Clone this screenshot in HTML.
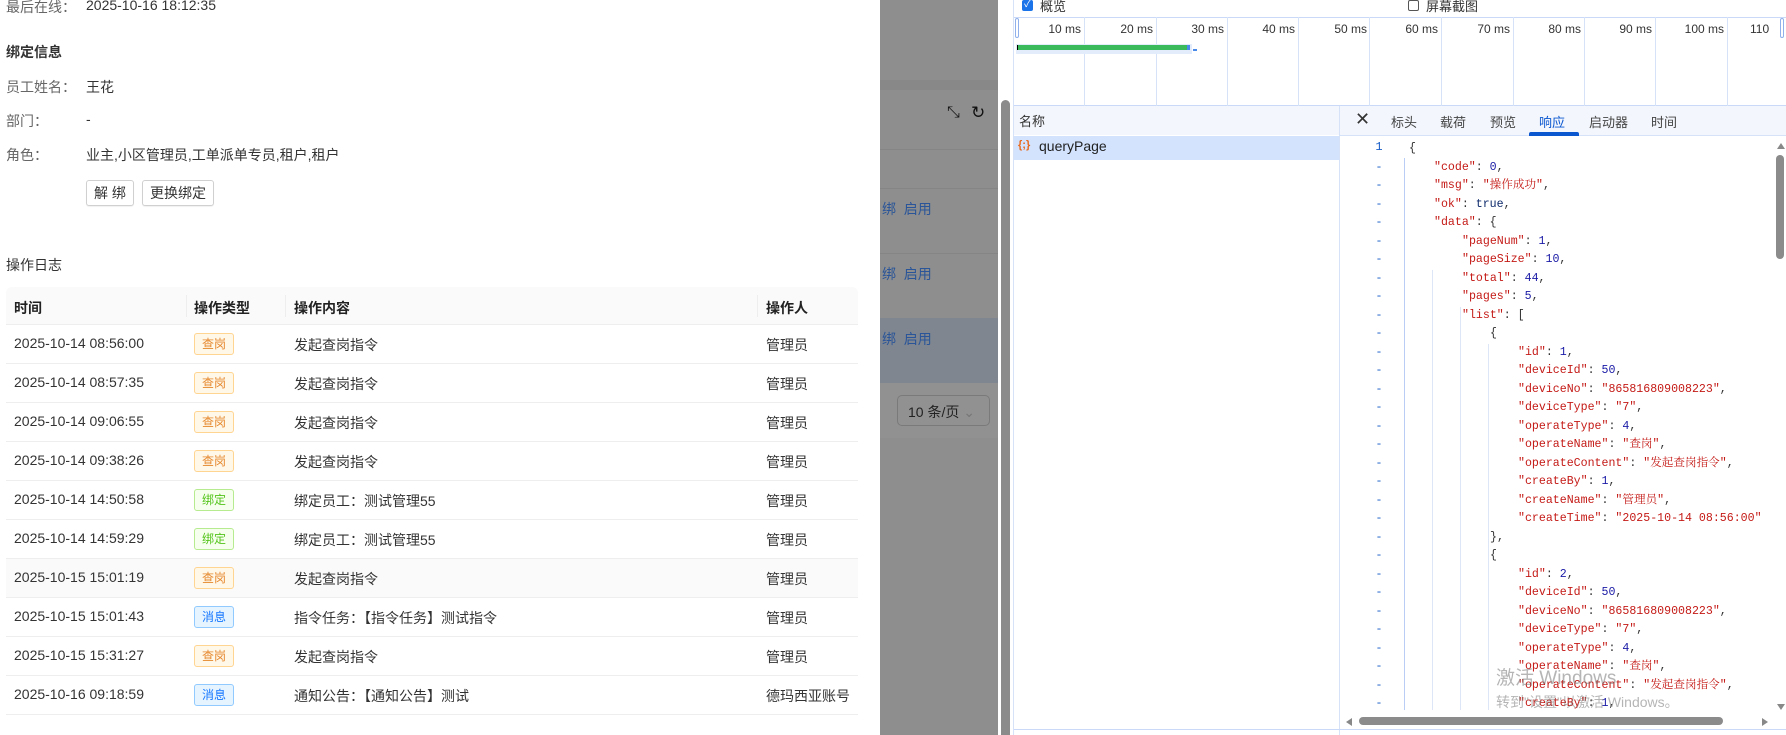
<!DOCTYPE html>
<html><head><meta charset="utf-8"><style>
*{margin:0;padding:0;box-sizing:border-box}
body{width:1786px;height:735px;overflow:hidden;background:#fff;font-family:"Liberation Sans","Noto Sans CJK SC",sans-serif;font-size:14px;color:#333;position:relative}
.a{position:absolute;white-space:nowrap}
.lbl{color:#666}
.btn{position:absolute;border:1px solid #d0d0d0;border-radius:3px;background:#fff;font-size:14px;line-height:24px;text-align:center;box-shadow:0 1px 1px rgba(0,0,0,.06)}
.row{position:absolute;left:10px;width:852px;height:39px;border-bottom:1px solid #eee;font-size:14px;color:#333}
.row span{position:absolute;top:10px}
.tag{position:absolute;left:188px;top:8px;width:40px;height:22px;border-radius:3px;font-size:12px;line-height:20px;text-align:center;border:1px solid}
.cha{color:#e6892e;background:#fff7e8;border-color:#ffd591}
.bd{color:#52c41a;background:#f6ffed;border-color:#b7eb8f}
.xx{color:#1677ff;background:#e6f4ff;border-color:#91caff}
.code{position:absolute;font-family:"Liberation Mono","Noto Serif CJK SC",monospace;font-size:11.6px;white-space:pre;line-height:18.5px}
.k{color:#c41a16}.n{color:#1a1aa6}.t{color:#333}
.ln{position:absolute;left:1374px;width:10px;color:#1a5fc8;font-family:"Liberation Mono",monospace;font-size:12px;text-align:center}
.g{position:absolute;width:1px;background:#b9cdf5}
.tk{position:absolute;top:17px;width:1px;height:89px;background:#d6e2f8}
.tl{position:absolute;top:22px;font-size:12px;color:#333;text-align:right;width:60px}
</style></head><body>
<!-- left panel -->
<div class="a lbl" style="left:6px;top:-3px">最后在线：</div>
<div class="a" style="left:86px;top:-3px">2025-10-16 18:12:35</div>
<div class="a" style="left:6px;top:42px;font-weight:bold;color:#333">绑定信息</div>
<div class="a lbl" style="left:6px;top:77px">员工姓名：</div><div class="a" style="left:86px;top:77px">王花</div>
<div class="a lbl" style="left:6px;top:111px">部门：</div><div class="a" style="left:86px;top:111px">-</div>
<div class="a lbl" style="left:6px;top:145px">角色：</div><div class="a" style="left:86px;top:145px">业主,小区管理员,工单派单专员,租户,租户</div>
<div class="btn" style="left:86px;top:180px;width:48px;height:26px">解 绑</div>
<div class="btn" style="left:142px;top:180px;width:72px;height:26px">更换绑定</div>
<div class="a" style="left:6px;top:255px;color:#333">操作日志</div>
<div class="a" style="left:6px;top:287px;width:852px;height:38px;background:#fafafa;border-bottom:1px solid #eee;border-radius:6px 6px 0 0;font-weight:bold;color:#222">
<span class="a" style="left:8px;top:11px">时间</span>
<span class="a" style="left:180px;top:8px;width:1px;height:22px;background:#eee"></span>
<span class="a" style="left:188px;top:11px">操作类型</span>
<span class="a" style="left:279px;top:8px;width:1px;height:22px;background:#eee"></span>
<span class="a" style="left:288px;top:11px">操作内容</span>
<span class="a" style="left:751px;top:8px;width:1px;height:22px;background:#eee"></span>
<span class="a" style="left:760px;top:11px">操作人</span>
</div>
<div class="row" style="left:6px;top:325px"><span style="left:8px">2025-10-14 08:56:00</span><div class="tag cha">查岗</div><span style="left:288px">发起查岗指令</span><span style="left:760px">管理员</span></div>
<div class="row" style="left:6px;top:364px"><span style="left:8px">2025-10-14 08:57:35</span><div class="tag cha">查岗</div><span style="left:288px">发起查岗指令</span><span style="left:760px">管理员</span></div>
<div class="row" style="left:6px;top:403px"><span style="left:8px">2025-10-14 09:06:55</span><div class="tag cha">查岗</div><span style="left:288px">发起查岗指令</span><span style="left:760px">管理员</span></div>
<div class="row" style="left:6px;top:442px"><span style="left:8px">2025-10-14 09:38:26</span><div class="tag cha">查岗</div><span style="left:288px">发起查岗指令</span><span style="left:760px">管理员</span></div>
<div class="row" style="left:6px;top:481px"><span style="left:8px">2025-10-14 14:50:58</span><div class="tag bd">绑定</div><span style="left:288px">绑定员工：测试管理55</span><span style="left:760px">管理员</span></div>
<div class="row" style="left:6px;top:520px"><span style="left:8px">2025-10-14 14:59:29</span><div class="tag bd">绑定</div><span style="left:288px">绑定员工：测试管理55</span><span style="left:760px">管理员</span></div>
<div class="row" style="left:6px;top:559px;background:#fafafa"><span style="left:8px">2025-10-15 15:01:19</span><div class="tag cha">查岗</div><span style="left:288px">发起查岗指令</span><span style="left:760px">管理员</span></div>
<div class="row" style="left:6px;top:598px"><span style="left:8px">2025-10-15 15:01:43</span><div class="tag xx">消息</div><span style="left:288px">指令任务：【指令任务】测试指令</span><span style="left:760px">管理员</span></div>
<div class="row" style="left:6px;top:637px"><span style="left:8px">2025-10-15 15:31:27</span><div class="tag cha">查岗</div><span style="left:288px">发起查岗指令</span><span style="left:760px">管理员</span></div>
<div class="row" style="left:6px;top:676px"><span style="left:8px">2025-10-16 09:18:59</span><div class="tag xx">消息</div><span style="left:288px">通知公告：【通知公告】测试</span><span style="left:760px">德玛西亚账号</span></div>

<!-- gray overlay area -->
<div class="a" style="left:880px;top:0;width:118px;height:735px;background:#8e8e8e"></div>
<div class="a" style="left:870px;top:725px;width:10px;height:10px;background:#fff;border-radius:0 0 8px 0"></div>
<div class="a" style="left:880px;top:80px;width:118px;height:10px;background:#888"></div>
<div class="a" style="left:880px;top:149px;width:118px;height:1px;background:#858585"></div>
<div class="a" style="left:880px;top:188px;width:118px;height:1px;background:#858585"></div>
<div class="a" style="left:880px;top:253px;width:118px;height:1px;background:#858585"></div>
<div class="a" style="left:880px;top:318px;width:118px;height:65px;background:#7f8690"></div>
<div class="a" style="left:880px;top:383px;width:118px;height:55px;background:#919191"></div>
<div class="a" style="left:947px;top:104px;font-size:16px;color:#111">⤡</div>
<div class="a" style="left:971px;top:103px;font-size:17px;color:#111">↻</div>
<div class="a" style="left:882px;top:199px;color:#2a5598">绑 &nbsp;启用</div>
<div class="a" style="left:882px;top:264px;color:#2a5598">绑 &nbsp;启用</div>
<div class="a" style="left:882px;top:329px;color:#2a5598">绑 &nbsp;启用</div>
<div class="a" style="left:897px;top:395px;width:93px;height:31px;border:1px solid #7a7a7a;border-radius:5px;padding:6px 10px;font-size:14px;color:#222">10 条/页 <span style="color:#777">⌄</span></div>
<div class="a" style="left:1001px;top:100px;width:9px;height:635px;background:#8b8b8b;border-radius:5px 5px 0 0"></div>

<!-- devtools -->
<div class="a" style="left:1013px;top:0;width:1px;height:735px;background:#d6e2f8"></div>
<div class="a" style="left:1022px;top:0;width:11px;height:11px;background:#1a73e8;border-radius:2px;color:#fff;font-size:10px;line-height:10px;text-align:center">✓</div>
<div class="a" style="left:1040px;top:-4px;font-size:13px">概览</div>
<div class="a" style="left:1408px;top:0;width:11px;height:11px;border:1px solid #555;border-radius:2px"></div>
<div class="a" style="left:1426px;top:-4px;font-size:13px">屏幕截图</div>
<div class="a" style="left:1014px;top:17px;width:772px;height:1px;background:#c9d9f7"></div>
<div class="a" style="left:1014px;top:105px;width:772px;height:1px;background:#c9d9f7"></div>
<div class="a" style="left:1015px;top:18px;width:4px;height:20px;border:1px solid #8fb0ea;border-radius:2px;background:#fff"></div>
<div class="a" style="left:1780px;top:18px;width:4px;height:20px;border:1px solid #8fb0ea;border-radius:2px;background:#fff"></div>
<div class="tk" style="left:1084px"></div><div class="tk" style="left:1156px"></div><div class="tk" style="left:1227px"></div><div class="tk" style="left:1298px"></div><div class="tk" style="left:1369px"></div><div class="tk" style="left:1441px"></div><div class="tk" style="left:1513px"></div><div class="tk" style="left:1584px"></div><div class="tk" style="left:1655px"></div><div class="tk" style="left:1727px"></div>
<div class="tl" style="left:1021px">10 ms</div><div class="tl" style="left:1093px">20 ms</div><div class="tl" style="left:1164px">30 ms</div><div class="tl" style="left:1235px">40 ms</div><div class="tl" style="left:1307px">50 ms</div><div class="tl" style="left:1378px">60 ms</div><div class="tl" style="left:1450px">70 ms</div><div class="tl" style="left:1521px">80 ms</div><div class="tl" style="left:1592px">90 ms</div><div class="tl" style="left:1664px">100 ms</div>
<div class="a" style="left:1750px;top:22px;font-size:12px">110</div>
<div class="a" style="left:1016px;top:44px;width:176px;height:10px;background:#e3ecfb"></div>
<div class="a" style="left:1017px;top:45px;width:173px;height:5px;background:#3bba5c;border-left:1px solid #000;border-right:3px solid #4a8ae8"></div>
<div class="a" style="left:1193px;top:49px;width:4px;height:2px;background:#4a8ae8"></div>
<!-- names pane -->
<div class="a" style="left:1014px;top:106px;width:325px;height:29px;background:#f3f6fc"></div>
<div class="a" style="left:1019px;top:111px;font-size:13px">名称</div>
<div class="a" style="left:1014px;top:136px;width:325px;height:24px;background:#d3e3fd"></div>
<div class="a" style="left:1018px;top:139px;font-size:11px;color:#e8691c;font-weight:bold">{;}</div>
<div class="a" style="left:1039px;top:138px;font-size:14px;color:#1f1f1f">queryPage</div>
<div class="a" style="left:1339px;top:106px;width:1px;height:629px;background:#d6e2f8"></div>
<!-- tabs -->
<div class="a" style="left:1340px;top:106px;width:446px;height:30px;background:#f3f6fc;border-bottom:1px solid #d6e2f8"></div>
<div class="a" style="left:1355px;top:109px;font-size:18px;color:#333">✕</div>
<div class="a" style="left:1391px;top:112px;font-size:13px;color:#444">标头</div>
<div class="a" style="left:1440px;top:112px;font-size:13px;color:#444">载荷</div>
<div class="a" style="left:1490px;top:112px;font-size:13px;color:#444">预览</div>
<div class="a" style="left:1539px;top:112px;font-size:13px;color:#0b57d0">响应</div>
<div class="a" style="left:1529px;top:132px;width:50px;height:4px;background:#0b57d0;border-radius:2px 2px 0 0"></div>
<div class="a" style="left:1589px;top:112px;font-size:13px;color:#444">启动器</div>
<div class="a" style="left:1651px;top:112px;font-size:13px;color:#444">时间</div>
<!-- guides -->
<div class="g" style="left:1404px;top:158px;height:557px"></div>
<div class="g" style="left:1432px;top:270px;height:445px;background:#dde6f7"></div>
<div class="g" style="left:1460px;top:307px;height:408px;background:#dde6f7"></div>
<div class="g" style="left:1488px;top:344px;height:371px;background:#dde6f7"></div>
<!-- code -->
<div class="ln" style="top:140px">1</div>
<div class="code t" style="left:1409px;top:140px">{</div>
<div class="code" style="left:1434px;top:158.5px"><span class="k">"code"</span>: <span class="n">0</span>,
<span class="k">"msg"</span>: <span class="k">"操作成功"</span>,
<span class="k">"ok"</span>: <span style="color:#0d2a6b">true</span>,
<span class="k">"data"</span>: {</div>
<div class="code" style="left:1462px;top:232.5px"><span class="k">"pageNum"</span>: <span class="n">1</span>,
<span class="k">"pageSize"</span>: <span class="n">10</span>,
<span class="k">"total"</span>: <span class="n">44</span>,
<span class="k">"pages"</span>: <span class="n">5</span>,
<span class="k">"list"</span>: [</div>
<div class="code" style="left:1490px;top:325px">{</div>
<div class="code" style="left:1518px;top:343.5px"><span class="k">"id"</span>: <span class="n">1</span>,
<span class="k">"deviceId"</span>: <span class="n">50</span>,
<span class="k">"deviceNo"</span>: <span class="k">"865816809008223"</span>,
<span class="k">"deviceType"</span>: <span class="k">"7"</span>,
<span class="k">"operateType"</span>: <span class="n">4</span>,
<span class="k">"operateName"</span>: <span class="k">"查岗"</span>,
<span class="k">"operateContent"</span>: <span class="k">"发起查岗指令"</span>,
<span class="k">"createBy"</span>: <span class="n">1</span>,
<span class="k">"createName"</span>: <span class="k">"管理员"</span>,
<span class="k">"createTime"</span>: <span class="k">"2025-10-14 08:56:00"</span></div>
<div class="code" style="left:1490px;top:528.5px">},
{</div>
<div class="code" style="left:1518px;top:565.5px"><span class="k">"id"</span>: <span class="n">2</span>,
<span class="k">"deviceId"</span>: <span class="n">50</span>,
<span class="k">"deviceNo"</span>: <span class="k">"865816809008223"</span>,
<span class="k">"deviceType"</span>: <span class="k">"7"</span>,
<span class="k">"operateType"</span>: <span class="n">4</span>,
<span class="k">"operateName"</span>: <span class="k">"查岗"</span>,
<span class="k">"operateContent"</span>: <span class="k">"发起查岗指令"</span>,
<span class="k">"createBy"</span>: <span class="n">1</span>,</div>
<div class="code" style="left:1374px;top:158.5px;color:#1a5fc8;width:10px;text-align:center">-
-
-
-
-
-
-
-
-
-
-
-
-
-
-
-
-
-
-
-
-
-
-
-
-
-
-
-
-
-</div>
<!-- scrollbars -->
<div class="a" style="left:1340px;top:710px;width:446px;height:25px;background:#fff"></div>
<div class="a" style="left:1777px;top:143px;width:0;height:0;border-left:4px solid transparent;border-right:4px solid transparent;border-bottom:6px solid #888"></div>
<div class="a" style="left:1776px;top:155px;width:8px;height:104px;background:#8b8b8b;border-radius:4px"></div>
<div class="a" style="left:1777px;top:704px;width:0;height:0;border-left:4px solid transparent;border-right:4px solid transparent;border-top:6px solid #888"></div>
<div class="a" style="left:1346px;top:718px;width:0;height:0;border-top:4px solid transparent;border-bottom:4px solid transparent;border-right:6px solid #888"></div>
<div class="a" style="left:1359px;top:717px;width:364px;height:8px;background:#8b8b8b;border-radius:4px"></div>
<div class="a" style="left:1762px;top:718px;width:0;height:0;border-top:4px solid transparent;border-bottom:4px solid transparent;border-left:6px solid #888"></div>
<div class="a" style="left:1014px;top:729px;width:772px;height:1px;background:#c9d9f7"></div>
<div class="a" style="left:1496px;top:663px;font-size:19px;color:rgba(120,120,120,.55)">激活 Windows</div>
<div class="a" style="left:1496px;top:692px;font-size:14px;color:rgba(120,120,120,.55)">转到"设置"以激活 Windows。</div>
</body></html>
